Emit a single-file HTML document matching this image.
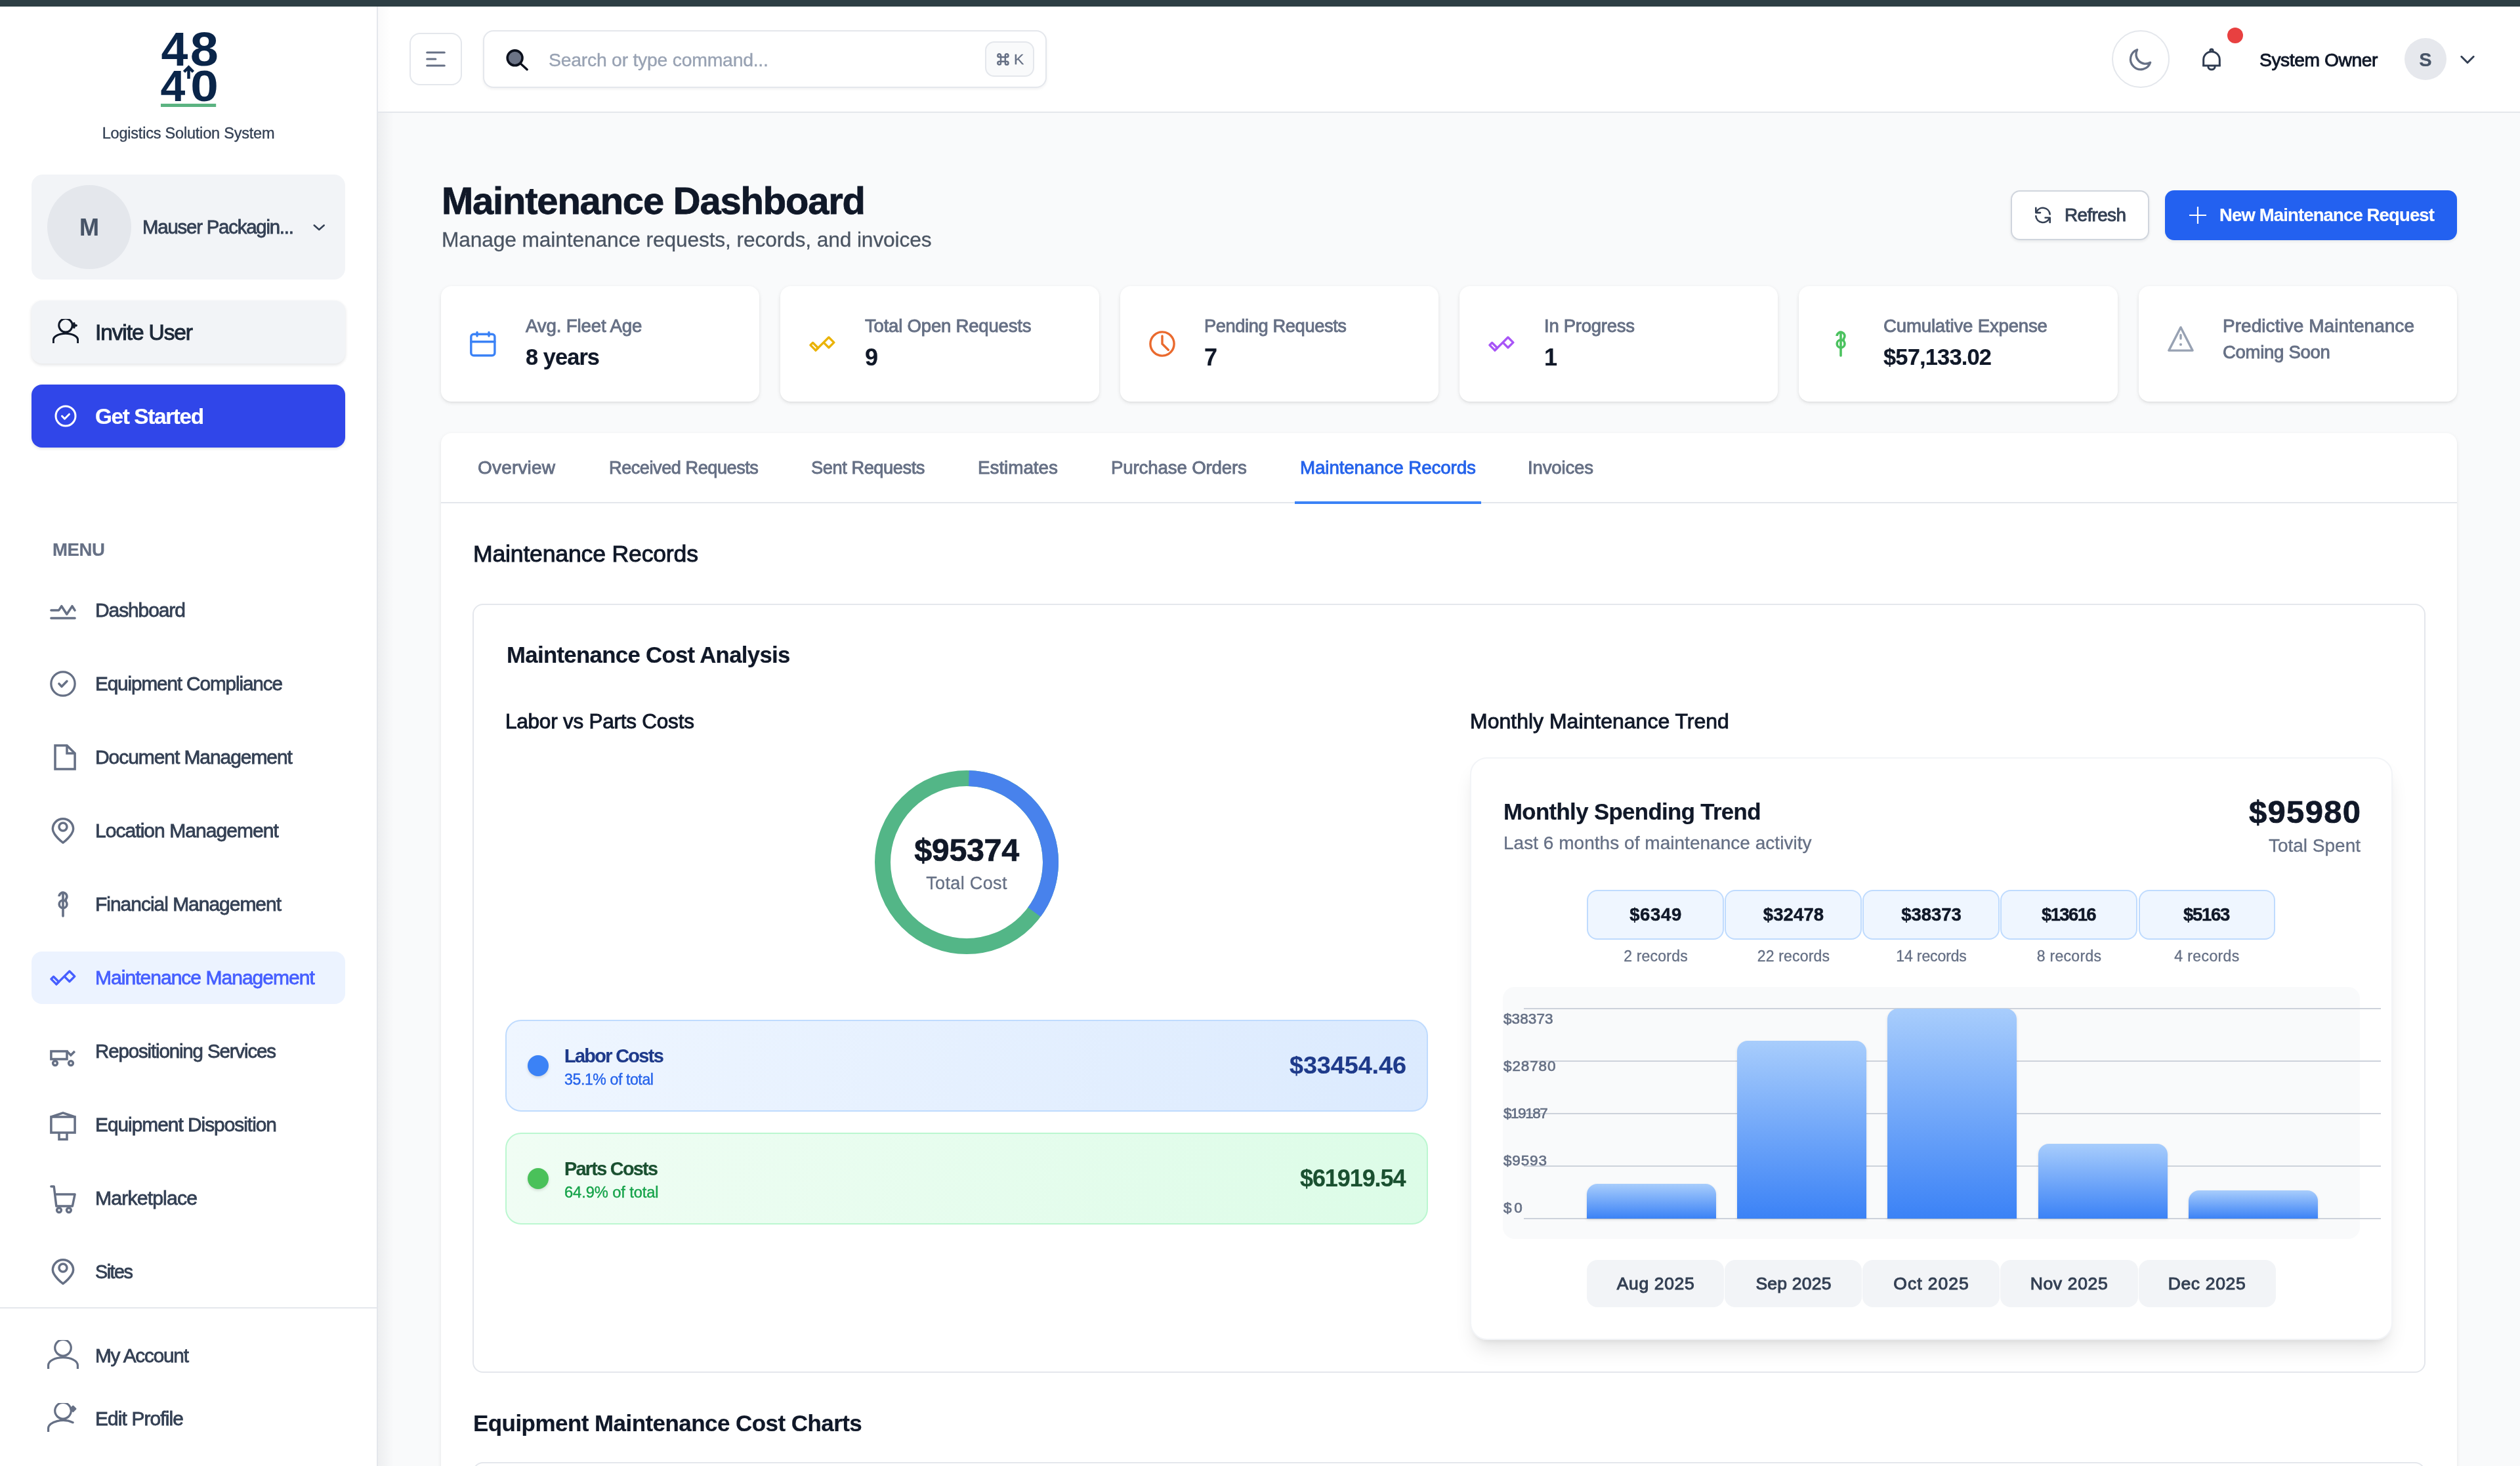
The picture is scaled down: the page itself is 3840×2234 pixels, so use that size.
<!DOCTYPE html>
<html lang="en"><head><meta charset="utf-8"><title>Maintenance Dashboard</title>
<style>
*{box-sizing:border-box;margin:0;padding:0}
html,body{width:3840px;height:2234px;overflow:hidden;background:#f9fafb;font-family:"Liberation Sans",sans-serif;position:relative}
svg{overflow:visible}
.t{will-change:transform}

</style></head>
<body>
<div style="position:absolute;left:0px;top:0px;width:3840.00px;height:10.00px;background:#2d3e44;"></div><div style="position:absolute;left:0px;top:10px;width:576.00px;height:2224.00px;background:#fff;border-right:2px solid #e4e7ec;"></div><div style="position:absolute;left:576px;top:172px;width:24.00px;height:2062.00px;background:linear-gradient(to right,rgba(16,24,40,.05),rgba(16,24,40,0));"></div><svg style="position:absolute;left:230px;top:40px;" width="116" height="130" viewBox="0 0 116 130" fill="none">
<g fill="#0a2549" font-family='"Liberation Sans", sans-serif' font-weight="700">
<text transform="translate(35.90,59.60) scale(1.03,1)" text-anchor="middle" font-size="71.4">4</text><text transform="translate(81.30,59.60) scale(1.085,1)" text-anchor="middle" font-size="71.4">8</text>
<text transform="translate(33.40,113.85) scale(1.02,1)" text-anchor="middle" font-size="66.7">4</text><text transform="translate(81.50,113.85) scale(1.148,1)" text-anchor="middle" font-size="66.7">0</text>
</g>
<path d="M57.500 80V64M50.500 69.500l7-7 7 7" stroke="#0a2549" stroke-width="4.500" fill="none"/>
<rect x="15" y="118" width="84.2" height="5" fill="#5bb381"/>
</svg><div class="t" style="position:absolute;top:188.2px;font-size:23.54px;line-height:31px;font-weight:400;color:#344054;white-space:nowrap;letter-spacing:-0.216px;-webkit-text-stroke:0.35px #344054;left:287.4px;transform:translateX(-50%);">Logistics Solution System</div><div style="position:absolute;left:48px;top:266px;width:478.00px;height:160.00px;background:#f2f4f7;border-radius:17px;"></div><div style="position:absolute;left:72px;top:282px;width:128.00px;height:128.00px;background:#e4e7ec;border-radius:50%;"></div><div class="t" style="position:absolute;top:322.5px;font-size:36.00px;line-height:47px;font-weight:700;color:#475467;white-space:nowrap;-webkit-text-stroke:0.2px #475467;left:136.0px;transform:translateX(-50%);">M</div><div class="t" style="position:absolute;top:325.0px;font-size:29.39px;line-height:42px;font-weight:400;color:#344054;white-space:nowrap;letter-spacing:-1.208px;-webkit-text-stroke:0.8px #344054;left:217.0px;">Mauser Packagin...</div><svg style="position:absolute;left:476px;top:338px;" width="22" height="16" viewBox="0 0 22 16" fill="none"> <path d="M2.700 5.300l7.550 6.700 7.550-6.700" stroke="#344054" stroke-width="2.500" stroke-linecap="round" stroke-linejoin="round"/></svg><div style="position:absolute;left:48px;top:458px;width:478.00px;height:96.00px;background:#f2f4f7;border-radius:16px;box-shadow:0 2px 5px rgba(16,24,40,.12);"></div><svg style="position:absolute;left:80px;top:486px;overflow:hidden" width="40.0" height="36.7" viewBox="0 0 48 44" fill="none"><g stroke="#101828" stroke-width="3.6" stroke-linecap="round"><circle cx="24" cy="11.800" r="12.300"/><path d="M1.6 46V38.6A22.4 12 0 0146.4 38.6V46"/></g><path d="M39.400 8.200v7.400M39.400 11.900h4" stroke="#101828" stroke-width="4.200" stroke-linecap="round"/></svg><div class="t" style="position:absolute;top:482.5px;font-size:33.50px;line-height:47px;font-weight:400;color:#1d2939;white-space:nowrap;letter-spacing:-1.112px;-webkit-text-stroke:1.0px #1d2939;left:145.0px;">Invite User</div><div style="position:absolute;left:48px;top:586px;width:478.00px;height:96.00px;background:#3046e9;border-radius:16px;box-shadow:0 2px 4px rgba(16,24,40,.12);"></div><svg style="position:absolute;left:83px;top:617px;" width="34" height="34" viewBox="0 0 34 34" fill="none"><g stroke="#fff" stroke-width="3" stroke-linecap="round" stroke-linejoin="round"><circle cx="17" cy="17" r="15"/><path d="M11.500 17l4 4.200 7-7"/></g></svg><div class="t" style="position:absolute;top:610.5px;font-size:33.30px;line-height:47px;font-weight:700;color:#fff;white-space:nowrap;letter-spacing:-1.348px;-webkit-text-stroke:0.2px #fff;left:145.0px;">Get Started</div><div class="t" style="position:absolute;top:820.0px;font-size:27.58px;line-height:36px;font-weight:700;color:#667085;white-space:nowrap;letter-spacing:-0.406px;-webkit-text-stroke:0.2px #667085;left:80.0px;">MENU</div><svg style="position:absolute;left:76px;top:910px;color:#667085;" width="40" height="40" viewBox="0 0 40 40" fill="none"><g stroke="#667085" stroke-width="3.500" stroke-linecap="round" stroke-linejoin="round"><path d="M1.900 19.900h11.800l4.100-6.200 8 12.300 8.200-12.300 4.100 6.400"/><path d="M1.900 32h36.200"/></g></svg><div class="t" style="position:absolute;top:909.0px;font-size:30.04px;line-height:42px;font-weight:400;color:#344054;white-space:nowrap;letter-spacing:-1.123px;-webkit-text-stroke:0.8px #344054;left:145.0px;">Dashboard</div><svg style="position:absolute;left:76px;top:1022px;color:#667085;" width="40" height="40" viewBox="0 0 40 40" fill="none"><g stroke="#667085" stroke-width="3.500" stroke-linecap="round" stroke-linejoin="round"><circle cx="20" cy="20" r="18.150" stroke-width="3.300"/><path d="M13.900 19.900l4.100 4.300 8-8.200"/></g></svg><div class="t" style="position:absolute;top:1021.0px;font-size:29.75px;line-height:42px;font-weight:400;color:#344054;white-space:nowrap;letter-spacing:-1.137px;-webkit-text-stroke:0.8px #344054;left:145.0px;">Equipment Compliance</div><svg style="position:absolute;left:76px;top:1134px;color:#667085;" width="40" height="40" viewBox="0 0 40 40" fill="none"><g stroke="#667085" stroke-width="3.500" stroke-linecap="butt" stroke-linejoin="miter"><path d="M8 1.900h18l12.100 12.100v24.100H8z"/><path d="M26 1.900v12.100h12.100"/></g></svg><div class="t" style="position:absolute;top:1133.0px;font-size:30.04px;line-height:42px;font-weight:400;color:#344054;white-space:nowrap;letter-spacing:-1.090px;-webkit-text-stroke:0.8px #344054;left:145.0px;">Document Management</div><svg style="position:absolute;left:76px;top:1246px;color:#667085;" width="40" height="40" viewBox="0 0 40 40" fill="none"><g stroke="#667085" stroke-width="3.500" stroke-linecap="round" stroke-linejoin="round" stroke-width="3.300"><path d="M20 38.200C20 38.200 4.350 26.500 4.350 17.300a15.650 15.650 0 0131.300 0C35.650 26.500 20 38.200 20 38.200z"/><circle cx="20" cy="13.900" r="6"/></g></svg><div class="t" style="position:absolute;top:1245.0px;font-size:30.09px;line-height:42px;font-weight:400;color:#344054;white-space:nowrap;letter-spacing:-0.987px;-webkit-text-stroke:0.8px #344054;left:145.0px;">Location Management</div><svg style="position:absolute;left:76px;top:1358px;color:#667085;" width="40" height="40" viewBox="0 0 40 40" fill="none"><g stroke="#667085" stroke-width="3.600" stroke-linejoin="round"><path d="M20 2.500V38" stroke-linecap="round"/><path d="M14.100 8A5.900 5.900 0 1124.270 12.170L24.270 15.730" stroke-linecap="butt"/><circle cx="20.100" cy="19.900" r="5.900"/></g></svg><div class="t" style="position:absolute;top:1357.0px;font-size:29.97px;line-height:42px;font-weight:400;color:#344054;white-space:nowrap;letter-spacing:-1.011px;-webkit-text-stroke:0.8px #344054;left:145.0px;">Financial Management</div><div style="position:absolute;left:48px;top:1450px;width:478.00px;height:80.00px;background:#ecf3ff;border-radius:16px;"></div><svg style="position:absolute;left:76px;top:1470px;color:#465fff;" width="40" height="40" viewBox="0 0 40 40" fill="none"><g stroke="currentColor" stroke-width="3.400" stroke-linejoin="round" stroke-linecap="round"><path d="M1.900 21.900l3.700-3.700 8 8-3.700 3.700z"/><path d="M9.900 29.900l20-19.900 7.900 7.900-7.900 7.900-7.900-7.900"/></g></svg><div class="t" style="position:absolute;top:1469.0px;font-size:30.09px;line-height:42px;font-weight:400;color:#465fff;white-space:nowrap;letter-spacing:-1.013px;-webkit-text-stroke:0.8px #465fff;left:145.0px;">Maintenance Management</div><svg style="position:absolute;left:76px;top:1582px;color:#667085;" width="40" height="40" viewBox="0 0 40 40" fill="none"><g stroke="#667085" stroke-width="3.500" stroke-linecap="butt" stroke-linejoin="miter"><path d="M1.900 19.900h24.100v12.100H1.900z"/><path d="M26 19.900l5.900 6.100 6-5.900"/><circle cx="8" cy="38.100" r="3.400"/><circle cx="32" cy="38.100" r="3.400"/></g></svg><div class="t" style="position:absolute;top:1581.0px;font-size:29.47px;line-height:42px;font-weight:400;color:#344054;white-space:nowrap;letter-spacing:-1.130px;-webkit-text-stroke:0.8px #344054;left:145.0px;">Repositioning Services</div><svg style="position:absolute;left:76px;top:1694px;color:#667085;" width="40" height="40" viewBox="0 0 40 40" fill="none"><g stroke="#667085" stroke-width="3.500" stroke-linecap="butt" stroke-linejoin="miter"><path d="M1.900 8h36.200v24H1.900z"/><path d="M1.900 8L20 1.900 38.100 8" stroke-linejoin="bevel"/><path d="M14 32v10.200h12V32"/></g></svg><div class="t" style="position:absolute;top:1693.0px;font-size:29.85px;line-height:42px;font-weight:400;color:#344054;white-space:nowrap;letter-spacing:-0.999px;-webkit-text-stroke:0.8px #344054;left:145.0px;">Equipment Disposition</div><svg style="position:absolute;left:76px;top:1806px;color:#667085;" width="40" height="40" viewBox="0 0 40 40" fill="none"><g stroke="#667085" stroke-width="3.500" stroke-linecap="round" stroke-linejoin="round"><path d="M1.900 1.900H6.200L9.850 32H34.400L38.100 14H8"/><circle cx="14" cy="38.100" r="3.400"/><circle cx="28.900" cy="38.100" r="3.400"/></g></svg><div class="t" style="position:absolute;top:1805.0px;font-size:30.27px;line-height:42px;font-weight:400;color:#344054;white-space:nowrap;letter-spacing:-0.889px;-webkit-text-stroke:0.8px #344054;left:145.0px;">Marketplace</div><svg style="position:absolute;left:76px;top:1918px;color:#667085;" width="40" height="40" viewBox="0 0 40 40" fill="none"><g stroke="#667085" stroke-width="3.500" stroke-linecap="round" stroke-linejoin="round" stroke-width="3.300"><path d="M20 38.200C20 38.200 4.350 26.500 4.350 17.300a15.650 15.650 0 0131.300 0C35.650 26.500 20 38.200 20 38.200z"/><circle cx="20" cy="13.900" r="6"/></g></svg><div class="t" style="position:absolute;top:1917.0px;font-size:28.89px;line-height:42px;font-weight:400;color:#344054;white-space:nowrap;letter-spacing:-1.559px;-webkit-text-stroke:0.8px #344054;left:145.0px;">Sites</div><div style="position:absolute;left:0px;top:1992px;width:574.00px;height:2.00px;background:#e4e7ec;"></div><svg style="position:absolute;left:72px;top:2042px;overflow:hidden" width="48.0" height="44.0" viewBox="0 0 48 44" fill="none"><g stroke="#667085" stroke-width="3.2" stroke-linecap="round"><circle cx="24" cy="11.800" r="12.300"/><path d="M1.6 46V38.6A22.4 12 0 0146.4 38.6V46"/></g></svg><div class="t" style="position:absolute;top:2045.0px;font-size:29.75px;line-height:42px;font-weight:400;color:#344054;white-space:nowrap;letter-spacing:-1.200px;-webkit-text-stroke:0.8px #344054;left:145.0px;">My Account</div><svg style="position:absolute;left:72px;top:2138px;overflow:hidden" width="48.0" height="44.0" viewBox="0 0 48 44" fill="none"><g stroke="#667085" stroke-width="3.2" stroke-linecap="round"><circle cx="24" cy="11.800" r="12.300"/><path d="M1.6 46V38.6A22.4 12 0 0139.1 29.7"/></g><rect x="35.300" y="4.900" width="8" height="8" rx="1.200" transform="rotate(45 39.300 8.900)" fill="#667085"/></svg><div class="t" style="position:absolute;top:2141.0px;font-size:29.89px;line-height:42px;font-weight:400;color:#344054;white-space:nowrap;letter-spacing:-0.866px;-webkit-text-stroke:0.8px #344054;left:145.0px;">Edit Profile</div><div style="position:absolute;left:576px;top:10px;width:3264.00px;height:162.00px;background:#fff;border-bottom:2px solid #e4e7ec;"></div><div style="position:absolute;left:576px;top:10px;width:20.00px;height:160.00px;background:linear-gradient(to right,rgba(16,24,40,.025),rgba(16,24,40,0));"></div><div style="position:absolute;left:624px;top:50px;width:80.00px;height:80.00px;border:2px solid #e4e7ec;border-radius:16px;"></div><svg style="position:absolute;left:648px;top:76px;" width="32" height="28" viewBox="0 0 32 28" fill="none"><g stroke="#667085" stroke-width="3.200" stroke-linecap="round"><path d="M2.800 4h26.400M2.800 14h13M2.800 24h26.400"/></g></svg><div style="position:absolute;left:735.8px;top:46px;width:859.70px;height:87.50px;background:#fff;border:2px solid #e4e7ec;border-radius:16px;box-shadow:0 2px 4px rgba(16,24,40,.06);"></div><svg style="position:absolute;left:770px;top:73px;" width="36" height="36" viewBox="0 0 36 36" fill="none"><circle cx="14.600" cy="15.300" r="11.400" fill="#6b7386" stroke="#0c111d" stroke-width="3.600"/><path d="M23.600 24.200l9.600 8.700" stroke="#0c111d" stroke-width="3.400" stroke-linecap="round"/></svg><div class="t" style="position:absolute;top:71.5px;font-size:28.45px;line-height:38px;font-weight:400;color:#98a2b3;white-space:nowrap;letter-spacing:-0.271px;-webkit-text-stroke:0.35px #98a2b3;left:835.5px;">Search or type command...</div><div style="position:absolute;left:1501px;top:63px;width:74.50px;height:54.00px;background:#f9fafb;border:2px solid #e4e7ec;border-radius:14px;"></div><svg style="position:absolute;left:1519.2px;top:81px;" width="18.8" height="18.8" viewBox="0 0 18.8 18.8" fill="none"><path d="M6 6h6.800v6.800H6zM6 6V3.650A2.350 2.350 0 103.650 6H6M12.800 6h2.350A2.350 2.350 0 1012.800 3.650V6M12.800 12.800v2.350A2.350 2.350 0 1015.150 12.800H12.800M6 12.800H3.650A2.350 2.350 0 106 15.150V12.800" stroke="#667085" stroke-width="2.500"/></svg><div class="t" style="position:absolute;top:75.0px;font-size:22.84px;line-height:31px;font-weight:400;color:#667085;white-space:nowrap;letter-spacing:-0.739px;-webkit-text-stroke:0.3px #667085;left:1545.0px;">K</div><div style="position:absolute;left:3218px;top:46px;width:88.00px;height:88.00px;border:2px solid #e4e7ec;border-radius:50%;background:#fff;"></div><svg style="position:absolute;left:3244px;top:72px;" width="36" height="36" viewBox="0 0 36 36" fill="none"><path d="M12.700 3.700A15.500 15.500 0 1032.700 23.200 14.500 14.500 0 0112.700 3.700z" stroke="#667085" stroke-width="3.300" stroke-linejoin="round"/></svg><svg style="position:absolute;left:3352px;top:70px;" width="36" height="42" viewBox="0 0 36 42" fill="none"><g stroke="#2f3b50" stroke-width="3" stroke-linejoin="miter"><path d="M4.200 30H31.800" stroke-linecap="butt"/><path d="M5.700 30V21a12.300 12.300 0 0124.600 0V30"/><path d="M15.900 9.200V7.200A2.100 2.100 0 0120.100 7.200V9.200"/><path d="M12.800 30.500v.6a5.200 5 0 0010.400 0v-.6"/></g></svg><div style="position:absolute;left:3394px;top:42px;width:24.00px;height:24.00px;background:#e84040;border-radius:50%;"></div><div class="t" style="position:absolute;top:71.5px;font-size:28.25px;line-height:38px;font-weight:400;color:#101828;white-space:nowrap;letter-spacing:-0.434px;-webkit-text-stroke:0.9px #101828;left:3443.0px;">System Owner</div><div style="position:absolute;left:3664px;top:58px;width:64.00px;height:64.00px;background:#e6e8ed;border-radius:50%;"></div><div class="t" style="position:absolute;top:71.5px;font-size:29.00px;line-height:38px;font-weight:700;color:#475467;white-space:nowrap;-webkit-text-stroke:0.2px #475467;left:3696.0px;transform:translateX(-50%);">S</div><svg style="position:absolute;left:3747px;top:82px;" width="26" height="18" viewBox="0 0 26 18" fill="none"><path d="M3.800 4.300l9.200 9.200 9.200-9.200" stroke="#344054" stroke-width="3" stroke-linecap="round" stroke-linejoin="round"/></svg><div class="t" style="position:absolute;top:266.5px;font-size:57.91px;line-height:78px;font-weight:700;color:#101828;white-space:nowrap;letter-spacing:-1.166px;-webkit-text-stroke:0.8px #101828;left:672.7px;">Maintenance Dashboard</div><div class="t" style="position:absolute;top:344.0px;font-size:31.73px;line-height:42px;font-weight:400;color:#4b5563;white-space:nowrap;letter-spacing:-0.127px;-webkit-text-stroke:0.3px #4b5563;left:672.7px;">Manage maintenance requests, records, and invoices</div><div style="position:absolute;left:3064px;top:290px;width:210.50px;height:75.50px;background:#fff;border:2px solid #d0d5dd;border-radius:14px;box-shadow:0 2px 4px rgba(16,24,40,.08);"></div><svg style="position:absolute;left:3100px;top:315px;" width="26" height="26" viewBox="0 0 26 26" fill="none"><g stroke="#344054" stroke-width="2.600" stroke-linecap="round" stroke-linejoin="round"><path d="M2.300 1.800V9.100H9"/><path d="M23.700 24V16.700H16.600"/><path d="M3.300 7.800A10.800 10.800 0 0123.700 11.500"/><path d="M22.600 18.200A10.800 10.800 0 012.300 14.400"/></g></svg><div class="t" style="position:absolute;top:309.0px;font-size:27.90px;line-height:38px;font-weight:400;color:#344054;white-space:nowrap;letter-spacing:-0.617px;-webkit-text-stroke:0.9px #344054;left:3146.4px;">Refresh</div><div style="position:absolute;left:3299px;top:290px;width:445.00px;height:76.00px;background:#2361f0;border-radius:14px;box-shadow:0 2px 4px rgba(16,24,40,.08);"></div><svg style="position:absolute;left:3336px;top:315px;" width="26" height="26" viewBox="0 0 26 26" fill="none"><path d="M13 0v26M0 13h26" stroke="#fff" stroke-width="2.200"/></svg><div class="t" style="position:absolute;top:309.0px;font-size:27.46px;line-height:38px;font-weight:700;color:#fff;white-space:nowrap;letter-spacing:-0.836px;-webkit-text-stroke:0.2px #fff;left:3381.6px;">New Maintenance Request</div><div style="position:absolute;left:672.0px;top:436px;width:485.33px;height:176.00px;background:#fff;border-radius:16px;box-shadow:0 2px 6px rgba(0,0,0,.09),0 2px 4px -2px rgba(0,0,0,.09);"></div><svg style="position:absolute;left:716.0px;top:504px;" width="40" height="40" viewBox="0 0 40 40" fill="none"><g stroke="#3b82f6" stroke-width="3.400" stroke-linecap="round" stroke-linejoin="round"><rect x="1.800" y="5.200" width="36.100" height="32.600" rx="4"/><path d="M1.800 16.700h36.100M11 2.500V8M29 2.500V8"/></g></svg><div class="t" style="position:absolute;top:478.6px;font-size:27.68px;line-height:36px;font-weight:400;color:#667085;white-space:nowrap;letter-spacing:-0.157px;-webkit-text-stroke:0.9px #667085;left:800.5px;">Avg. Fleet Age</div><div class="t" style="position:absolute;top:521.0px;font-size:34.35px;line-height:47px;font-weight:700;color:#101828;white-space:nowrap;letter-spacing:-0.905px;-webkit-text-stroke:0.2px #101828;left:800.5px;">8 years</div><div style="position:absolute;left:1189.3333333333333px;top:436px;width:485.33px;height:176.00px;background:#fff;border-radius:16px;box-shadow:0 2px 6px rgba(0,0,0,.09),0 2px 4px -2px rgba(0,0,0,.09);"></div><svg style="position:absolute;left:1233.3333333333333px;top:504px;color:#eab308;" width="40" height="40" viewBox="0 0 40 40" fill="none"><g stroke="currentColor" stroke-width="3.400" stroke-linejoin="round" stroke-linecap="round"><path d="M1.900 21.900l3.700-3.700 8 8-3.700 3.700z"/><path d="M9.900 29.900l20-19.900 7.900 7.900-7.900 7.900-7.900-7.900"/></g></svg><div class="t" style="position:absolute;top:478.6px;font-size:27.57px;line-height:36px;font-weight:400;color:#667085;white-space:nowrap;letter-spacing:-0.218px;-webkit-text-stroke:0.9px #667085;left:1317.8px;">Total Open Requests</div><div class="t" style="position:absolute;top:521.0px;font-size:36.00px;line-height:47px;font-weight:700;color:#101828;white-space:nowrap;-webkit-text-stroke:0.2px #101828;left:1317.8px;">9</div><div style="position:absolute;left:1706.6666666666665px;top:436px;width:485.33px;height:176.00px;background:#fff;border-radius:16px;box-shadow:0 2px 6px rgba(0,0,0,.09),0 2px 4px -2px rgba(0,0,0,.09);"></div><svg style="position:absolute;left:1750.6666666666665px;top:504px;" width="40" height="40" viewBox="0 0 40 40" fill="none"><g stroke="#ea6a2e" stroke-width="3.400" stroke-linecap="round" stroke-linejoin="round"><circle cx="20" cy="20" r="18.100"/><path d="M20 8v12l9.300 9.200" stroke-linejoin="miter"/></g></svg><div class="t" style="position:absolute;top:478.6px;font-size:27.27px;line-height:36px;font-weight:400;color:#667085;white-space:nowrap;letter-spacing:-0.389px;-webkit-text-stroke:0.9px #667085;left:1835.2px;">Pending Requests</div><div class="t" style="position:absolute;top:521.0px;font-size:36.00px;line-height:47px;font-weight:700;color:#101828;white-space:nowrap;-webkit-text-stroke:0.2px #101828;left:1835.2px;">7</div><div style="position:absolute;left:2224.0px;top:436px;width:485.33px;height:176.00px;background:#fff;border-radius:16px;box-shadow:0 2px 6px rgba(0,0,0,.09),0 2px 4px -2px rgba(0,0,0,.09);"></div><svg style="position:absolute;left:2268.0px;top:504px;color:#a855f7;" width="40" height="40" viewBox="0 0 40 40" fill="none"><g stroke="currentColor" stroke-width="3.400" stroke-linejoin="round" stroke-linecap="round"><path d="M1.900 21.900l3.700-3.700 8 8-3.700 3.700z"/><path d="M9.900 29.900l20-19.900 7.900 7.900-7.900 7.900-7.900-7.900"/></g></svg><div class="t" style="position:absolute;top:478.6px;font-size:27.49px;line-height:36px;font-weight:400;color:#667085;white-space:nowrap;letter-spacing:-0.256px;-webkit-text-stroke:0.9px #667085;left:2352.5px;">In Progress</div><div class="t" style="position:absolute;top:521.0px;font-size:36.00px;line-height:47px;font-weight:700;color:#101828;white-space:nowrap;-webkit-text-stroke:0.2px #101828;left:2352.5px;">1</div><div style="position:absolute;left:2741.333333333333px;top:436px;width:485.33px;height:176.00px;background:#fff;border-radius:16px;box-shadow:0 2px 6px rgba(0,0,0,.09),0 2px 4px -2px rgba(0,0,0,.09);"></div><svg style="position:absolute;left:2785.333333333333px;top:504px;" width="40" height="40" viewBox="0 0 40 40" fill="none"><g stroke="#4bc25f" stroke-width="3.600" stroke-linejoin="round"><path d="M20 2.500V38" stroke-linecap="round"/><path d="M14.100 8A5.900 5.900 0 1124.270 12.170L24.270 15.730" stroke-linecap="butt"/><circle cx="20.100" cy="19.900" r="5.900"/></g></svg><div class="t" style="position:absolute;top:478.6px;font-size:27.63px;line-height:36px;font-weight:400;color:#667085;white-space:nowrap;letter-spacing:-0.199px;-webkit-text-stroke:0.9px #667085;left:2869.8px;">Cumulative Expense</div><div class="t" style="position:absolute;top:521.0px;font-size:34.45px;line-height:47px;font-weight:700;color:#101828;white-space:nowrap;letter-spacing:-0.825px;-webkit-text-stroke:0.2px #101828;left:2869.8px;">$57,133.02</div><div style="position:absolute;left:3258.666666666666px;top:436px;width:485.33px;height:176.00px;background:#fff;border-radius:16px;box-shadow:0 2px 6px rgba(0,0,0,.09),0 2px 4px -2px rgba(0,0,0,.09);"></div><svg style="position:absolute;left:3302.666666666666px;top:496px;" width="40" height="40" viewBox="0 0 40 40" fill="none"><g stroke="#98a2b3" stroke-width="3.400" stroke-linecap="round" stroke-linejoin="round"><path d="M20 2.900L1.900 38.100h36.200z"/><path d="M20 14.500v5.500"/><path d="M20 28.900v.1" stroke-width="4"/></g></svg><div class="t" style="position:absolute;top:478.5px;font-size:28.00px;line-height:36px;font-weight:400;color:#667085;white-space:nowrap;letter-spacing:0.045px;-webkit-text-stroke:0.9px #667085;left:3387.2px;">Predictive Maintenance</div><div class="t" style="position:absolute;top:518.6px;font-size:27.53px;line-height:36px;font-weight:400;color:#667085;white-space:nowrap;letter-spacing:-0.280px;-webkit-text-stroke:0.9px #667085;left:3387.2px;">Coming Soon</div><div style="position:absolute;left:672px;top:660px;width:3072.00px;height:1640.00px;background:#fff;border-radius:16px;box-shadow:0 2px 6px rgba(0,0,0,.08),0 2px 4px -2px rgba(0,0,0,.08);"></div><div style="position:absolute;left:672px;top:765px;width:3072.00px;height:2.00px;background:#e4e7ec;"></div><div class="t" style="position:absolute;top:695.0px;font-size:28.00px;line-height:36px;font-weight:400;color:#667085;white-space:nowrap;letter-spacing:0.185px;-webkit-text-stroke:0.9px #667085;left:728.0px;">Overview</div><div class="t" style="position:absolute;top:695.0px;font-size:27.13px;line-height:36px;font-weight:400;color:#667085;white-space:nowrap;letter-spacing:-0.456px;-webkit-text-stroke:0.9px #667085;left:927.6px;">Received Requests</div><div class="t" style="position:absolute;top:695.0px;font-size:27.21px;line-height:36px;font-weight:400;color:#667085;white-space:nowrap;letter-spacing:-0.418px;-webkit-text-stroke:0.9px #667085;left:1236.0px;">Sent Requests</div><div class="t" style="position:absolute;top:695.0px;font-size:27.89px;line-height:36px;font-weight:400;color:#667085;white-space:nowrap;letter-spacing:-0.058px;-webkit-text-stroke:0.9px #667085;left:1490.0px;">Estimates</div><div class="t" style="position:absolute;top:695.0px;font-size:27.69px;line-height:36px;font-weight:400;color:#667085;white-space:nowrap;letter-spacing:-0.165px;-webkit-text-stroke:0.9px #667085;left:1693.0px;">Purchase Orders</div><div class="t" style="position:absolute;top:695.0px;font-size:27.77px;line-height:36px;font-weight:400;color:#2563eb;white-space:nowrap;letter-spacing:-0.121px;-webkit-text-stroke:0.9px #2563eb;left:1981.0px;">Maintenance Records</div><div class="t" style="position:absolute;top:695.0px;font-size:27.63px;line-height:36px;font-weight:400;color:#667085;white-space:nowrap;letter-spacing:-0.193px;-webkit-text-stroke:0.9px #667085;left:2328.0px;">Invoices</div><div style="position:absolute;left:1972.8px;top:764px;width:284.20px;height:4.00px;background:#3b82f6;"></div><div class="t" style="position:absolute;top:820.9px;font-size:35.63px;line-height:47px;font-weight:400;color:#101828;white-space:nowrap;letter-spacing:-0.199px;-webkit-text-stroke:1.0px #101828;left:720.6px;">Maintenance Records</div><div style="position:absolute;left:720px;top:920px;width:2976.00px;height:1172.00px;border:2px solid #e4e7ec;border-radius:16px;"></div><div class="t" style="position:absolute;top:975.0px;font-size:34.73px;line-height:47px;font-weight:700;color:#101828;white-space:nowrap;letter-spacing:-0.661px;-webkit-text-stroke:0.2px #101828;left:771.5px;">Maintenance Cost Analysis</div><div class="t" style="position:absolute;top:1078.0px;font-size:31.51px;line-height:42px;font-weight:400;color:#101828;white-space:nowrap;letter-spacing:-0.235px;-webkit-text-stroke:0.9px #101828;left:770.0px;">Labor vs Parts Costs</div><div class="t" style="position:absolute;top:1078.0px;font-size:32.00px;line-height:42px;font-weight:400;color:#101828;white-space:nowrap;-webkit-text-stroke:0.9px #101828;left:2240.0px;">Monthly Maintenance Trend</div><svg style="position:absolute;left:1333.1px;top:1174.1px;" width="280" height="280" viewBox="0 0 280 280" fill="none"><circle cx="140" cy="140" r="128" stroke="#53b687" stroke-width="24"/><path d="M143.35 12.04A128 128 0 0 1 243.03 215.96" stroke="#4882ec" stroke-width="24"/></svg><div class="t" style="position:absolute;top:1263.2px;font-size:48.44px;line-height:64px;font-weight:700;color:#101828;white-space:nowrap;letter-spacing:-0.369px;-webkit-text-stroke:0.7px #101828;left:1473.0px;transform:translateX(-50%);">$95374</div><div class="t" style="position:absolute;top:1328.7px;font-size:27.00px;line-height:35px;font-weight:400;color:#667085;white-space:nowrap;letter-spacing:0.349px;-webkit-text-stroke:0.35px #667085;left:1473.4px;transform:translateX(-50%);">Total Cost</div><div style="position:absolute;left:770px;top:1554px;width:1406.00px;height:140.00px;background:linear-gradient(100deg,#eff6ff,#dbeafe);border:2px solid #bfdbfe;border-radius:24px;"></div><div style="position:absolute;left:804px;top:1608px;width:32.00px;height:32.00px;background:#3b82f6;border-radius:50%;box-shadow:0 2px 4px rgba(0,0,0,.14);"></div><div class="t" style="position:absolute;top:1587.5px;font-size:28.85px;line-height:42px;font-weight:700;color:#1e3a8a;white-space:nowrap;letter-spacing:-1.659px;-webkit-text-stroke:0.2px #1e3a8a;left:860.0px;">Labor Costs</div><div class="t" style="position:absolute;top:1629.7px;font-size:23.10px;line-height:31px;font-weight:400;color:#2563eb;white-space:nowrap;letter-spacing:-0.406px;-webkit-text-stroke:0.4px #2563eb;left:860.0px;">35.1% of total</div><div class="t" style="position:absolute;top:1599.0px;font-size:37.83px;line-height:49px;font-weight:700;color:#1e3a8a;white-space:nowrap;letter-spacing:-0.102px;-webkit-text-stroke:0.2px #1e3a8a;right:1697.3px;">$33454.46</div><div style="position:absolute;left:770px;top:1726px;width:1406.00px;height:140.00px;background:linear-gradient(100deg,#f0fdf4,#dcfce7);border:2px solid #bbf7d0;border-radius:24px;"></div><div style="position:absolute;left:804px;top:1780px;width:32.00px;height:32.00px;background:#4ac15a;border-radius:50%;box-shadow:0 2px 4px rgba(0,0,0,.14);"></div><div class="t" style="position:absolute;top:1759.5px;font-size:28.80px;line-height:42px;font-weight:700;color:#1a5030;white-space:nowrap;letter-spacing:-1.706px;-webkit-text-stroke:0.2px #1a5030;left:860.0px;">Parts Costs</div><div class="t" style="position:absolute;top:1801.5px;font-size:23.74px;line-height:31px;font-weight:400;color:#16a34a;white-space:nowrap;letter-spacing:-0.121px;-webkit-text-stroke:0.4px #16a34a;left:860.0px;">64.9% of total</div><div class="t" style="position:absolute;top:1771.0px;font-size:36.03px;line-height:49px;font-weight:700;color:#1a5030;white-space:nowrap;letter-spacing:-1.104px;-webkit-text-stroke:0.2px #1a5030;right:1698.3px;">$61919.54</div><div style="position:absolute;left:2240px;top:1154px;width:1406.00px;height:888.00px;background:#fff;border:2px solid #f2f4f7;border-radius:26px;box-shadow:0 20px 30px -6px rgba(0,0,0,.1),0 8px 12px -8px rgba(0,0,0,.1);"></div><div class="t" style="position:absolute;top:1212.5px;font-size:34.80px;line-height:47px;font-weight:700;color:#101828;white-space:nowrap;letter-spacing:-0.643px;-webkit-text-stroke:0.2px #101828;left:2290.5px;">Monthly Spending Trend</div><div class="t" style="position:absolute;top:1267.0px;font-size:28.00px;line-height:36px;font-weight:400;color:#667085;white-space:nowrap;letter-spacing:0.029px;-webkit-text-stroke:0.35px #667085;left:2290.5px;">Last 6 months of maintenance activity</div><div class="t" style="position:absolute;top:1205.0px;font-size:49.00px;line-height:64px;font-weight:700;color:#101828;white-space:nowrap;letter-spacing:1.297px;-webkit-text-stroke:0.7px #101828;right:241.7px;">$95980</div><div class="t" style="position:absolute;top:1270.5px;font-size:27.99px;line-height:36px;font-weight:400;color:#667085;white-space:nowrap;letter-spacing:-0.005px;-webkit-text-stroke:0.35px #667085;right:243.5px;">Total Spent</div><div style="position:absolute;left:2418.1px;top:1356px;width:208.90px;height:75.50px;background:#eff6ff;border:2px solid #bfdbfe;border-radius:16px;"></div><div class="t" style="position:absolute;top:1375.3px;font-size:27.50px;line-height:38px;font-weight:700;color:#101828;white-space:nowrap;letter-spacing:0.629px;-webkit-text-stroke:0.5px #101828;left:2522.9px;transform:translateX(-50%);">$6349</div><div class="t" style="position:absolute;top:1442.0px;font-size:23.00px;line-height:31px;font-weight:400;color:#667085;white-space:nowrap;letter-spacing:0.203px;-webkit-text-stroke:0.35px #667085;left:2522.7px;transform:translateX(-50%);">2 records</div><div style="position:absolute;left:2418.1px;top:1920px;width:209.20px;height:72.00px;background:#f2f4f7;border-radius:16px;"></div><div class="t" style="position:absolute;top:1938.0px;font-size:26.50px;line-height:36px;font-weight:400;color:#344054;white-space:nowrap;letter-spacing:0.647px;-webkit-text-stroke:1.0px #344054;left:2522.9px;transform:translateX(-50%);">Aug 2025</div><div style="position:absolute;left:2628.2px;top:1356px;width:208.90px;height:75.50px;background:#eff6ff;border:2px solid #bfdbfe;border-radius:16px;"></div><div class="t" style="position:absolute;top:1375.3px;font-size:27.50px;line-height:38px;font-weight:700;color:#101828;white-space:nowrap;letter-spacing:0.125px;-webkit-text-stroke:0.5px #101828;left:2732.8px;transform:translateX(-50%);">$32478</div><div class="t" style="position:absolute;top:1442.0px;font-size:23.00px;line-height:31px;font-weight:400;color:#667085;white-space:nowrap;letter-spacing:0.182px;-webkit-text-stroke:0.35px #667085;left:2732.8px;transform:translateX(-50%);">22 records</div><div style="position:absolute;left:2628.2px;top:1920px;width:209.20px;height:72.00px;background:#f2f4f7;border-radius:16px;"></div><div class="t" style="position:absolute;top:1938.0px;font-size:26.50px;line-height:36px;font-weight:400;color:#344054;white-space:nowrap;letter-spacing:0.219px;-webkit-text-stroke:1.0px #344054;left:2732.8px;transform:translateX(-50%);">Sep 2025</div><div style="position:absolute;left:2838.2999999999997px;top:1356px;width:208.90px;height:75.50px;background:#eff6ff;border:2px solid #bfdbfe;border-radius:16px;"></div><div class="t" style="position:absolute;top:1375.3px;font-size:27.50px;line-height:38px;font-weight:700;color:#101828;white-space:nowrap;letter-spacing:-0.015px;-webkit-text-stroke:0.5px #101828;left:2942.8px;transform:translateX(-50%);">$38373</div><div class="t" style="position:absolute;top:1442.0px;font-size:23.00px;line-height:31px;font-weight:400;color:#667085;white-space:nowrap;letter-spacing:-0.118px;-webkit-text-stroke:0.35px #667085;left:2942.7px;transform:translateX(-50%);">14 records</div><div style="position:absolute;left:2838.2999999999997px;top:1920px;width:209.20px;height:72.00px;background:#f2f4f7;border-radius:16px;"></div><div class="t" style="position:absolute;top:1938.0px;font-size:26.50px;line-height:36px;font-weight:400;color:#344054;white-space:nowrap;letter-spacing:0.964px;-webkit-text-stroke:1.0px #344054;left:2943.3px;transform:translateX(-50%);">Oct 2025</div><div style="position:absolute;left:3048.3999999999996px;top:1356px;width:208.90px;height:75.50px;background:#eff6ff;border:2px solid #bfdbfe;border-radius:16px;"></div><div class="t" style="position:absolute;top:1375.3px;font-size:27.50px;line-height:38px;font-weight:700;color:#101828;white-space:nowrap;letter-spacing:-1.615px;-webkit-text-stroke:0.5px #101828;left:3152.1px;transform:translateX(-50%);">$13616</div><div class="t" style="position:absolute;top:1442.0px;font-size:23.00px;line-height:31px;font-weight:400;color:#667085;white-space:nowrap;letter-spacing:0.315px;-webkit-text-stroke:0.35px #667085;left:3153.1px;transform:translateX(-50%);">8 records</div><div style="position:absolute;left:3048.3999999999996px;top:1920px;width:209.20px;height:72.00px;background:#f2f4f7;border-radius:16px;"></div><div class="t" style="position:absolute;top:1938.0px;font-size:26.50px;line-height:36px;font-weight:400;color:#344054;white-space:nowrap;letter-spacing:0.650px;-webkit-text-stroke:1.0px #344054;left:3153.2px;transform:translateX(-50%);">Nov 2025</div><div style="position:absolute;left:3258.5px;top:1356px;width:208.90px;height:75.50px;background:#eff6ff;border:2px solid #bfdbfe;border-radius:16px;"></div><div class="t" style="position:absolute;top:1375.3px;font-size:27.50px;line-height:38px;font-weight:700;color:#101828;white-space:nowrap;letter-spacing:-1.246px;-webkit-text-stroke:0.5px #101828;left:3362.4px;transform:translateX(-50%);">$5163</div><div class="t" style="position:absolute;top:1442.0px;font-size:23.00px;line-height:31px;font-weight:400;color:#667085;white-space:nowrap;letter-spacing:0.390px;-webkit-text-stroke:0.35px #667085;left:3363.2px;transform:translateX(-50%);">4 records</div><div style="position:absolute;left:3258.5px;top:1920px;width:209.20px;height:72.00px;background:#f2f4f7;border-radius:16px;"></div><div class="t" style="position:absolute;top:1938.0px;font-size:26.50px;line-height:36px;font-weight:400;color:#344054;white-space:nowrap;letter-spacing:0.650px;-webkit-text-stroke:1.0px #344054;left:3363.3px;transform:translateX(-50%);">Dec 2025</div><div style="position:absolute;left:2290px;top:1504px;width:1305.50px;height:384.00px;background:#f9fafb;border-radius:18px;"></div><div style="position:absolute;left:2322px;top:1536px;width:1306.00px;height:2.00px;background:#cdd2db;"></div><div style="position:absolute;left:2322px;top:1616px;width:1306.00px;height:2.00px;background:#cdd2db;"></div><div style="position:absolute;left:2322px;top:1696px;width:1306.00px;height:2.00px;background:#cdd2db;"></div><div style="position:absolute;left:2322px;top:1776px;width:1306.00px;height:2.00px;background:#cdd2db;"></div><div style="position:absolute;left:2322px;top:1856px;width:1306.00px;height:2.00px;background:#cdd2db;"></div><div class="t" style="position:absolute;top:1536.9px;font-size:22.50px;line-height:31px;font-weight:400;color:#667085;white-space:nowrap;letter-spacing:0.102px;-webkit-text-stroke:0.7px #667085;left:2291.0px;">$38373</div><div class="t" style="position:absolute;top:1608.9px;font-size:22.50px;line-height:31px;font-weight:400;color:#667085;white-space:nowrap;letter-spacing:0.882px;-webkit-text-stroke:0.7px #667085;left:2291.0px;">$28780</div><div class="t" style="position:absolute;top:1680.9px;font-size:22.50px;line-height:31px;font-weight:400;color:#667085;white-space:nowrap;letter-spacing:-1.458px;-webkit-text-stroke:0.7px #667085;left:2291.0px;">$19187</div><div class="t" style="position:absolute;top:1752.9px;font-size:22.50px;line-height:31px;font-weight:400;color:#667085;white-space:nowrap;letter-spacing:0.855px;-webkit-text-stroke:0.7px #667085;left:2291.0px;">$9593</div><div class="t" style="position:absolute;top:1824.9px;font-size:22.50px;line-height:31px;font-weight:400;color:#667085;white-space:nowrap;letter-spacing:3.666px;-webkit-text-stroke:0.7px #667085;left:2291.0px;">$0</div><div style="position:absolute;left:2418px;top:1804.0544393193131px;width:197.00px;height:52.95px;background:linear-gradient(to top,#3b82f6,#a8cdfc);border-radius:16px 16px 0 0;box-shadow:0 2px 4px rgba(16,24,40,.12);"></div><div style="position:absolute;left:2647px;top:1586.1595653193651px;width:197.00px;height:270.84px;background:linear-gradient(to top,#3b82f6,#a8cdfc);border-radius:16px 16px 0 0;box-shadow:0 2px 4px rgba(16,24,40,.12);"></div><div style="position:absolute;left:2876px;top:1537.0px;width:197.00px;height:320.00px;background:linear-gradient(to top,#3b82f6,#a8cdfc);border-radius:16px 16px 0 0;box-shadow:0 2px 4px rgba(16,24,40,.12);"></div><div style="position:absolute;left:3106px;top:1743.4534959476716px;width:197.00px;height:113.55px;background:linear-gradient(to top,#3b82f6,#a8cdfc);border-radius:16px 16px 0 0;box-shadow:0 2px 4px rgba(16,24,40,.12);"></div><div style="position:absolute;left:3335px;top:1813.9447267610037px;width:197.00px;height:43.06px;background:linear-gradient(to top,#3b82f6,#a8cdfc);border-radius:16px 16px 0 0;box-shadow:0 2px 4px rgba(16,24,40,.12);"></div><div class="t" style="position:absolute;top:2145.2px;font-size:34.98px;line-height:47px;font-weight:700;color:#101828;white-space:nowrap;letter-spacing:-0.540px;-webkit-text-stroke:0.2px #101828;left:720.7px;">Equipment Maintenance Cost Charts</div><div style="position:absolute;left:720px;top:2228px;width:2976.00px;height:172.00px;border:2px solid #e4e7ec;border-radius:16px;"></div>
<script>(function(){var w=window.innerWidth;if(w&&Math.abs(w-3840)>2){document.documentElement.style.zoom=w/3840}})();</script>
</body></html>
